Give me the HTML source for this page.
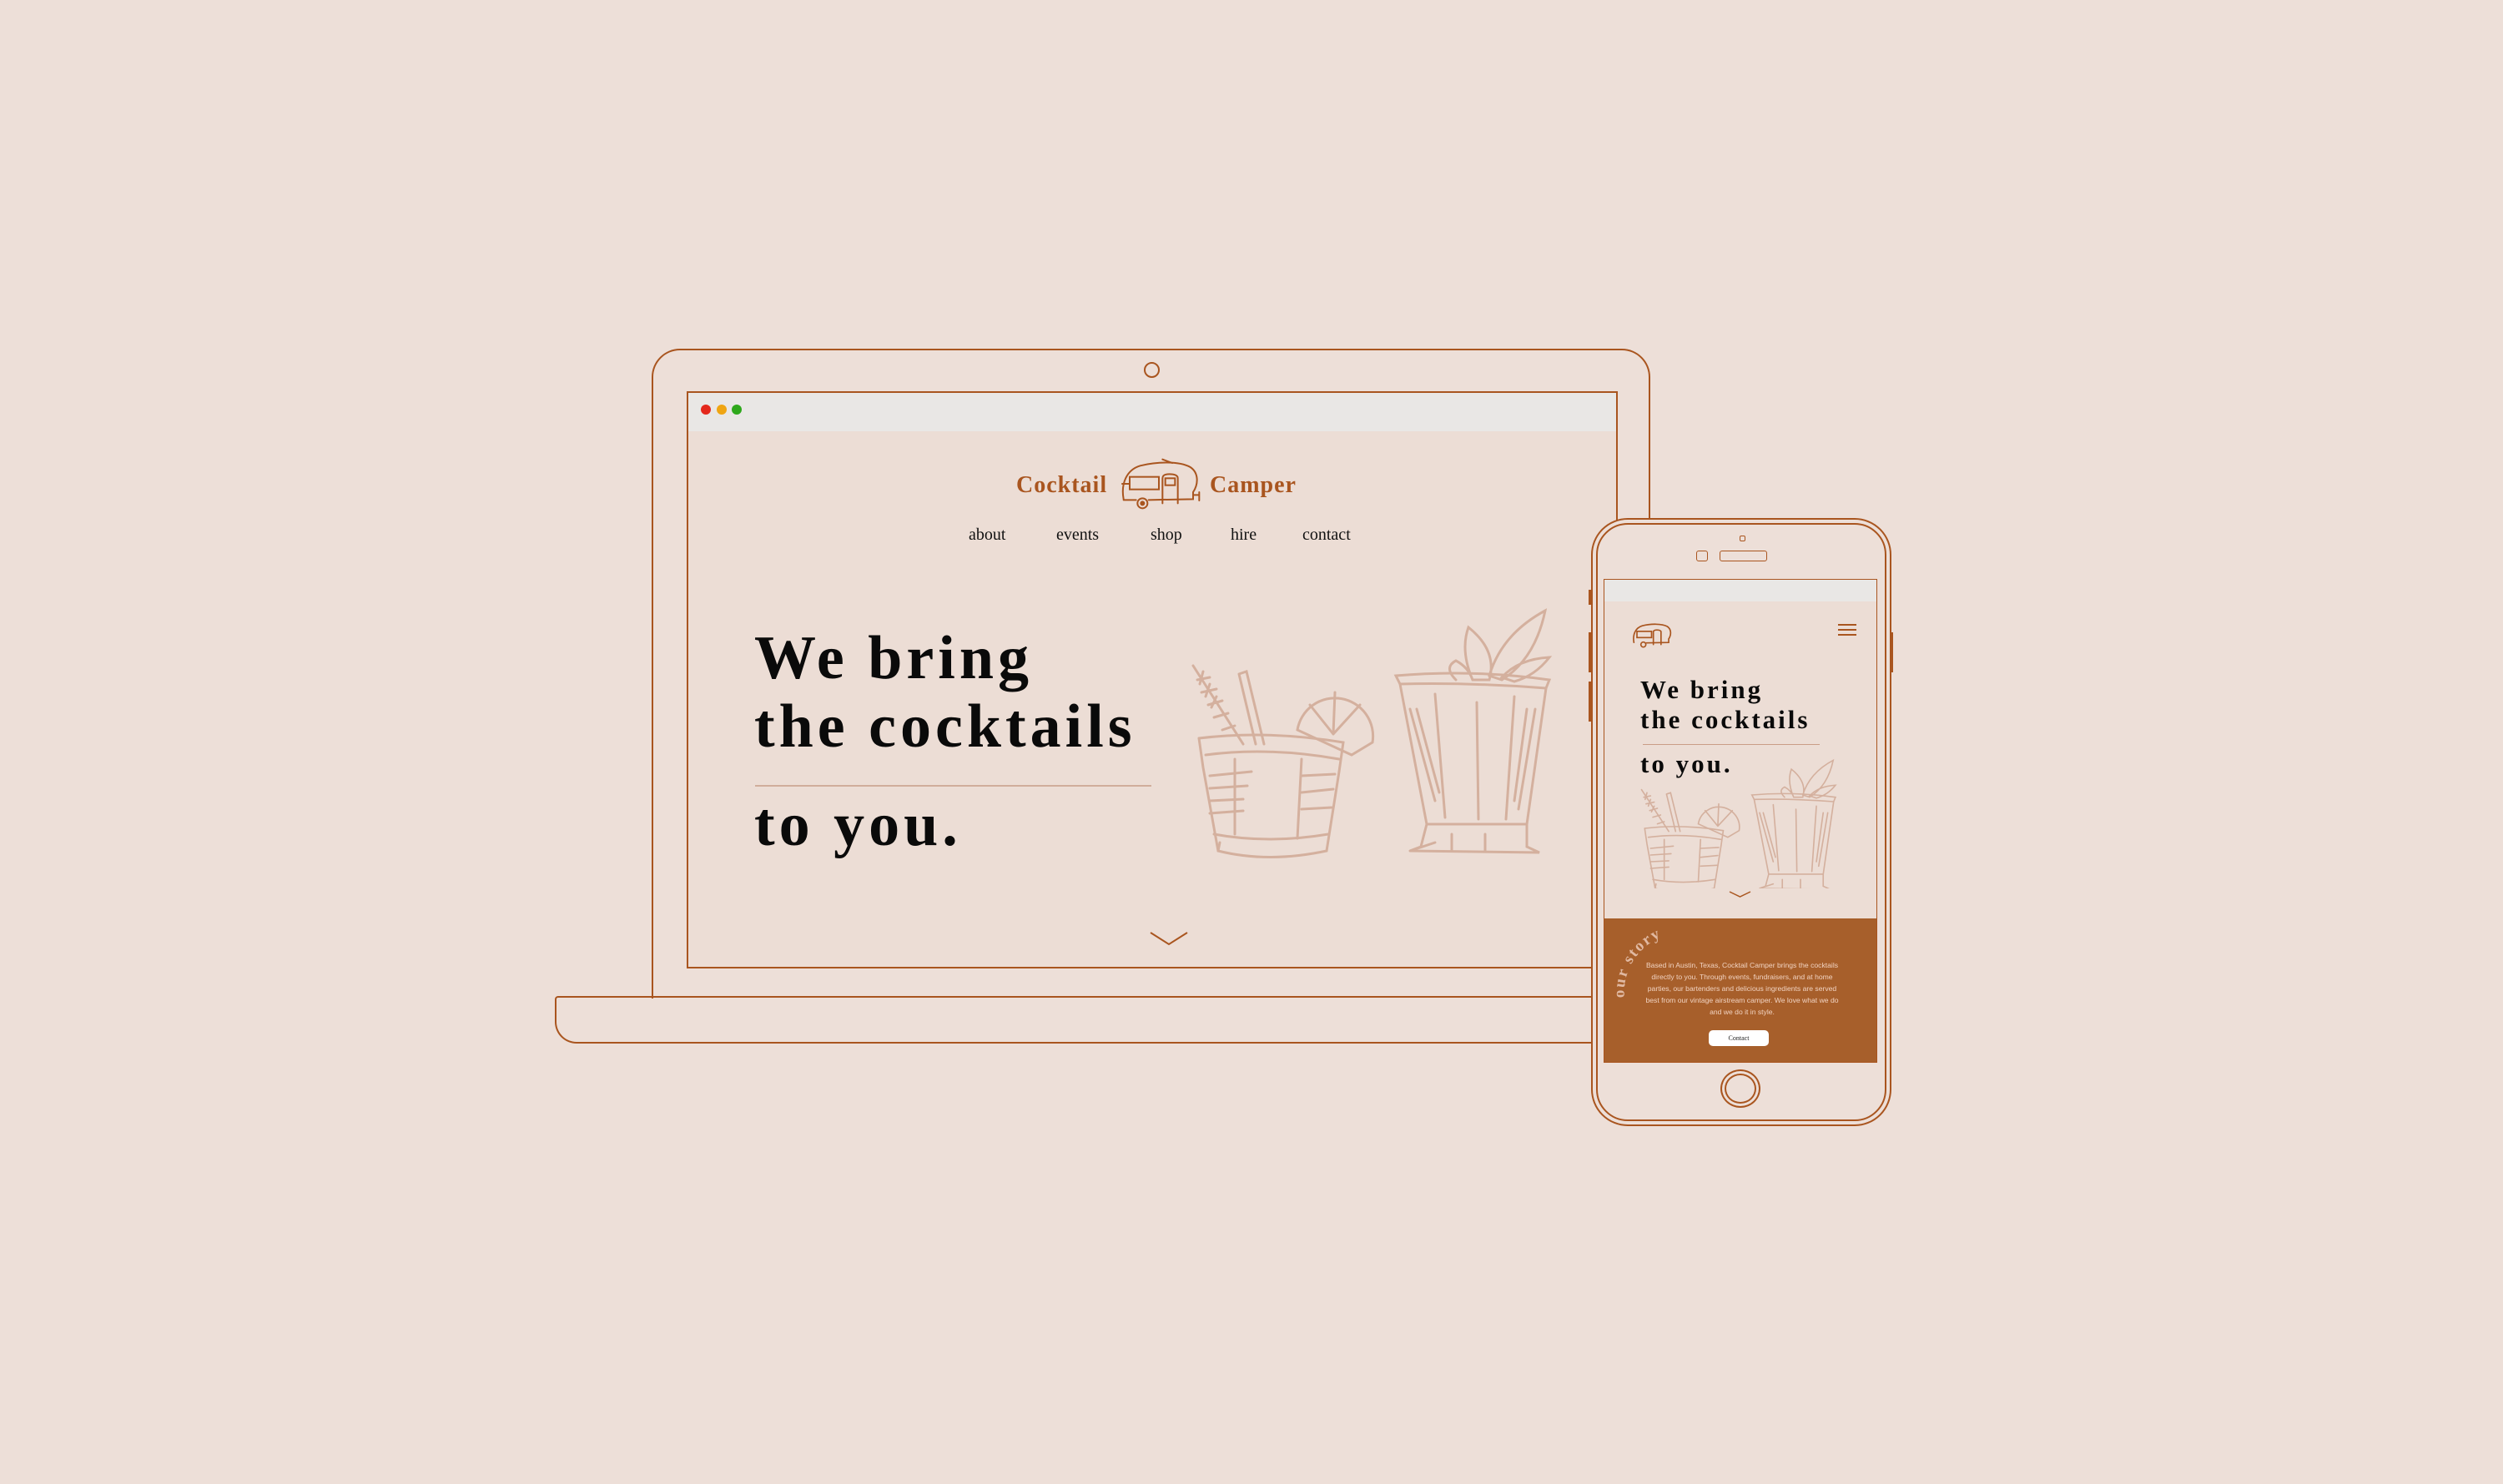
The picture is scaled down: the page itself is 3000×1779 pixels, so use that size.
<!DOCTYPE html>
<html><head><meta charset="utf-8">
<style>
html,body{margin:0;padding:0}
body{width:3000px;height:1779px;background:#eddfd8;position:relative;overflow:hidden;font-family:"Liberation Serif",serif}
.a{position:absolute}
.ln{border:2px solid #a9551f;box-sizing:border-box}
.h{font-family:"Liberation Serif",serif;font-weight:bold;color:#0a0a0a;white-space:nowrap;letter-spacing:5px}
.nav{font-size:20px;color:#111;top:630px}
</style></head><body>

<div class="a ln" style="left:665px;top:1194px;width:1260px;height:57px;border-radius:4px 0 0 26px;border-right:none"></div>
<div class="a ln" style="left:781px;top:418px;width:1197px;height:779px;border-radius:34px 34px 0 0;border-bottom:none"></div>
<div class="a ln" style="left:1371px;top:434px;width:19px;height:19px;border-radius:50%"></div>
<div class="a ln" style="left:823px;top:469px;width:1116px;height:692px;background:#ecddd5"></div>
<div class="a" style="left:825px;top:471px;width:1112px;height:46px;background:#e9e7e5"></div>
<div class="a" style="left:840px;top:485px;width:12px;height:12px;border-radius:50%;background:#e4281c"></div>
<div class="a" style="left:859px;top:485px;width:12px;height:12px;border-radius:50%;background:#efa512"></div>
<div class="a" style="left:877px;top:485px;width:12px;height:12px;border-radius:50%;background:#2ea81c"></div>

<div class="a" style="left:1218px;top:566px;font-size:28px;font-weight:bold;color:#a9551f;letter-spacing:1px">Cocktail</div>
<div class="a" style="left:1450px;top:566px;font-size:28px;font-weight:bold;color:#a9551f;letter-spacing:1px">Camper</div>
<svg class="a" style="left:1330px;top:540px" width="120" height="80" viewBox="0 0 360 240" fill="none" stroke="#a9551f" stroke-width="6" stroke-linecap="round">
<path d="M50 175 C40 120 60 70 110 55 C170 40 250 38 290 60 C320 80 320 120 300 150 L300 175 L140 178"/>
<path d="M95 178 L50 178"/>
<path d="M190 32 L225 45"/>
<rect x="72" y="95" width="105" height="45"/>
<path d="M190 190 L190 100 Q190 85 215 85 Q245 85 245 100 L245 190"/>
<rect x="200" y="100" width="35" height="25"/>
<path d="M300 160 L322 160 M322 150 L322 180"/>
<path d="M45 120 L70 120"/>
<circle cx="118" cy="190" r="18"/><circle cx="118" cy="190" r="6" fill="#a9551f"/>
</svg>

<div class="a nav" style="left:1161px">about</div>
<div class="a nav" style="left:1266px">events</div>
<div class="a nav" style="left:1379px">shop</div>
<div class="a nav" style="left:1475px">hire</div>
<div class="a nav" style="left:1561px">contact</div>

<div class="a h" style="left:904px;top:752px;font-size:74px;line-height:74px">We bring</div>
<div class="a h" style="left:904px;top:834px;font-size:74px;line-height:74px">the cocktails</div>
<div class="a" style="left:905px;top:941px;width:475px;height:2px;background:#d0ad9b"></div>
<div class="a h" style="left:904px;top:952px;font-size:74px;line-height:74px">to you.</div>

<svg class="a" style="left:1378px;top:1116px" width="46" height="18" viewBox="0 0 46 18"><path d="M1 2 L23 16 L45 2" fill="none" stroke="#a9551f" stroke-width="2"/></svg>

<svg width="0" height="0" style="position:absolute">
<defs>
<g id="gl" fill="none" stroke="#d4b09e" stroke-width="3" stroke-linecap="round">
 <path d="M10 78 L70 172 M15 95 L30 92 M20 110 L38 106 M28 125 L45 120 M35 140 L52 135 M45 155 L60 150 M22 85 L18 100 M30 100 L25 115 M38 115 L32 128"/>
 <path d="M65 88 L74 85 L95 172 M65 88 L85 172"/>
 <path d="M135 155 A45 45 0 0 1 225 170 L200 185 Z M180 110 L178 160 M150 125 L178 160 M210 125 L178 160"/>
 <path d="M17 165 Q100 155 190 170 L185 205"/>
 <path d="M17 165 L22 200 L40 300 Q100 315 170 300 L185 205"/>
 <path d="M25 185 Q100 175 185 190 M35 280 Q100 292 172 280 M40 300 L42 290"/>
 <path d="M60 190 L60 280 M140 190 L135 285"/>
 <path d="M30 210 L80 205 M30 225 L75 222 M30 240 L70 238 M140 210 L180 208 M140 230 L178 226 M30 255 L70 252 M140 250 L176 248"/>
 <path d="M253 90 Q345 82 437 95 L433 105 Q345 98 258 100 Z"/>
 <path d="M258 100 L290 268 L410 268 L433 105"/>
 <path d="M290 268 L283 295 L270 300 L425 302 L410 295 L410 268"/>
 <path d="M300 112 L312 260 M350 122 L352 262 M395 115 L385 262"/>
 <path d="M270 130 L300 240 M278 130 L305 230 M410 130 L395 240 M420 130 L400 250 M270 300 L300 290 M320 280 L320 300 M360 280 L360 300"/>
 <path d="M345 95 Q330 60 340 32 Q375 60 365 95 Z M365 90 Q380 40 432 12 Q420 70 380 95 Z M380 92 Q400 70 437 68 Q420 90 395 97 Z M325 95 Q310 80 325 72 Q340 80 345 95"/>
</g>
</defs></svg>
<svg class="a" style="left:1420px;top:720px" width="450" height="330" viewBox="0 0 450 330"><use href="#gl"/></svg>

<div class="a ln" style="left:1907px;top:621px;width:360px;height:729px;border-radius:44px;background:#eddfd8"></div>
<div class="a ln" style="left:1913px;top:627px;width:348px;height:717px;border-radius:38px"></div>
<div class="a" style="left:1904px;top:707px;width:4px;height:18px;background:#a9551f"></div>
<div class="a" style="left:1904px;top:758px;width:4px;height:48px;background:#a9551f"></div>
<div class="a" style="left:1904px;top:817px;width:4px;height:48px;background:#a9551f"></div>
<div class="a" style="left:2265px;top:758px;width:4px;height:48px;background:#a9551f"></div>
<div class="a ln" style="left:2085px;top:642px;width:7px;height:7px;border-radius:2px;border-width:1.5px"></div>
<div class="a ln" style="left:2033px;top:660px;width:14px;height:13px;border-radius:3px;border-width:1.5px"></div>
<div class="a ln" style="left:2061px;top:660px;width:57px;height:13px;border-radius:3px;border-width:1.5px"></div>
<div class="a ln" style="left:2062px;top:1282px;width:48px;height:46px;border-radius:50%"></div>
<div class="a ln" style="left:2067px;top:1287px;width:38px;height:36px;border-radius:50%"></div>

<div class="a" style="left:1922px;top:694px;width:328px;height:580px;border:1px solid #a9551f;box-sizing:border-box;background:#ecddd5"></div>
<div class="a" style="left:1923px;top:695px;width:326px;height:26px;background:#e9e7e5"></div>
<svg class="a" style="left:1950px;top:741px" width="60" height="40" viewBox="0 0 360 240" fill="none" stroke="#a9551f" stroke-width="10" stroke-linecap="round">
<path d="M50 175 C40 120 60 70 110 55 C170 40 250 38 290 60 C320 80 320 120 300 150 L300 175 L140 178"/>
<rect x="72" y="95" width="105" height="45"/>
<path d="M190 190 L190 100 Q190 85 215 85 Q245 85 245 100 L245 190"/>
<circle cx="118" cy="190" r="18"/>
</svg>
<div class="a" style="left:2203px;top:748px;width:22px;height:2px;background:#a9551f"></div>
<div class="a" style="left:2203px;top:754px;width:22px;height:2px;background:#a9551f"></div>
<div class="a" style="left:2203px;top:760px;width:22px;height:2px;background:#a9551f"></div>

<div class="a h" style="left:1966px;top:811px;font-size:31px;line-height:31px;letter-spacing:3px">We bring</div>
<div class="a h" style="left:1966px;top:847px;font-size:31px;line-height:31px;letter-spacing:3px">the cocktails</div>
<div class="a" style="left:1969px;top:892px;width:212px;height:1px;background:#c99d86"></div>
<div class="a h" style="left:1966px;top:900px;font-size:31px;line-height:31px;letter-spacing:3px">to you.</div>
<svg class="a" style="left:1962px;top:905px" width="245" height="160" viewBox="0 0 450 300" preserveAspectRatio="none"><use href="#gl"/></svg>
<svg class="a" style="left:2072px;top:1068px" width="27" height="9"><path d="M1 1 L13.5 7 L26 1" fill="none" stroke="#a9551f" stroke-width="1.5"/></svg>

<div class="a" style="left:1923px;top:1101px;width:326px;height:172px;background:#a75f2b"></div>
<svg class="a" style="left:1925px;top:1100px" width="110" height="110" viewBox="0 0 110 110">
<path id="arc" d="M22 96 A72 72 0 0 1 100 18" fill="none"/>
<text font-family="Liberation Serif,serif" font-weight="bold" font-size="19" fill="#e1b9a2" letter-spacing="2"><textPath href="#arc">our story</textPath></text>
</svg>
<div class="a" style="left:1972px;top:1150px;width:232px;text-align:center;font-family:'Liberation Sans',sans-serif;font-size:8.6px;line-height:14px;color:#f1d2c0">Based in Austin, Texas, Cocktail Camper brings the cocktails directly to you. Through events, fundraisers, and at home parties, our bartenders and delicious ingredients are served best from our vintage airstream camper. We love what we do and we do it in style.</div>
<div class="a" style="left:2048px;top:1235px;width:72px;height:19px;border-radius:5px;background:#fff;font-size:8px;line-height:19px;text-align:center;color:#222">Contact</div>
</body></html>
